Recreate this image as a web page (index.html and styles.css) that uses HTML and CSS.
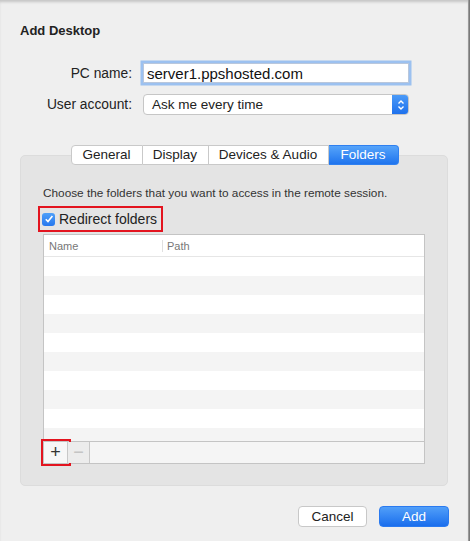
FILE: index.html
```html
<!DOCTYPE html>
<html lang="en">
<head>
<meta charset="UTF-8" />
<title>Add Desktop</title>
<link rel="stylesheet" href="styles.css">
</head>
<body>
<div class="window">
  <h1>Add Desktop</h1>

  <div class="form">
    <label for="pcName">PC name:</label>
    <input type="text" id="pcName" class="field focused" value="server1.ppshosted.com" />
    <label for="account">User account:</label>
    <div class="select" id="account">
      <span>Ask me every time</span>
      <span class="stepper">
        <svg width="8" height="12" viewBox="0 0 8 12"><path d="M1.5 4.5 L4 2 L6.5 4.5 M1.5 7.5 L4 10 L6.5 7.5" fill="none" stroke="#fff" stroke-width="1.4"/></svg>
      </span>
    </div>
  </div>

  <div class="tabs">
    <span class="tab">General</span>
    <span class="tab">Display</span>
    <span class="tab">Devices &amp; Audio</span>
    <span class="tab active">Folders</span>
  </div>
  <div class="group">
    <p class="desc">Choose the folders that you want to access in the remote session.</p>
    <label class="check highlight">
      <span class="box">
        <svg width="10" height="10" viewBox="0 0 10 10"><path d="M1.8 5.2 L4 7.6 L8.4 2" fill="none" stroke="#fff" stroke-width="1.6"/></svg>
      </span>
      Redirect folders
    </label>

    <div class="table">
      <div class="thead">
        <span class="col-name">Name</span>
        <span class="col-path">Path</span>
      </div>
      <div class="rows">
        <div class="row"></div><div class="row"></div><div class="row"></div>
        <div class="row"></div><div class="row"></div><div class="row"></div>
        <div class="row"></div><div class="row"></div><div class="row"></div>
        <div class="row"></div>
      </div>
      <div class="toolbar">
        <span class="tool plus highlight">+</span>
        <span class="tool minus">&minus;</span>
        <span class="tool-fill"></span>
      </div>
    </div>
  </div>

  <div class="actions">
    <button class="btn">Cancel</button>
    <button class="btn primary">Add</button>
  </div>
</div>
</body>
</html>
```
FILE: styles.css
```css
html, body {
  margin: 0;
  padding: 0;
  background: #7a7a7a;
}
body {
  font-family: "Liberation Sans", Arial, sans-serif;
  color: #222;
}
.window {
  width: 468px;
  height: 541px;
  background: #efefef;
  border-right: 1px solid #9a9a9a;
  box-shadow: inset 0 3px 3px -1px rgba(0, 0, 0, 0.18);
  overflow: hidden;
}
h1 {
  margin: 0;
  padding: 23px 0 0 20px;
  font-size: 13px;
  line-height: 16px;
  font-weight: bold;
}

/* form */
.form {
  display: grid;
  grid-template-columns: 132px 266px;
  column-gap: 11px;
  row-gap: 11px;
  align-items: center;
  margin-top: 24px;
}
.form label {
  text-align: right;
  font-size: 13.8px;
}
.field {
  box-sizing: border-box;
  height: 20px;
  padding: 0 3px;
  font: 15px "Liberation Sans", Arial, sans-serif;
  color: #111;
  border: 1px solid #b9c7dc;
  background: #fff;
  outline: none;
}
.field.focused {
  box-shadow: 0 0 0 2.5px #9cc1f0;
}
.select {
  box-sizing: border-box;
  height: 21px;
  display: flex;
  align-items: center;
  justify-content: space-between;
  background: #fff;
  border: 1px solid #c6c6c6;
  border-radius: 4px;
  font-size: 13.5px;
  padding-left: 8px;
  overflow: hidden;
}
.stepper {
  width: 17px;
  height: 21px;
  margin-right: -1px;
  background: linear-gradient(#4d9cf8, #1c6fec);
  display: flex;
  align-items: center;
  justify-content: center;
  border-radius: 0 4px 4px 0;
}

/* tabs */
.tabs {
  display: flex;
  justify-content: center;
  margin: 30px 0 -10px 1px;
  position: relative;
}
.tab {
  box-sizing: border-box;
  height: 20px;
  line-height: 18px;
  font-size: 13.5px;
  text-align: center;
  background: #fff;
  border: 1px solid #c9c9c9;
  border-left: none;
}
.tab:nth-child(1) { width: 72px; border-left: 1px solid #c9c9c9; border-radius: 4px 0 0 4px; }
.tab:nth-child(2) { width: 66px; }
.tab:nth-child(3) { width: 120px; }
.tab.active {
  width: 70px;
  color: #fff;
  border-color: #2f80f0;
  background: linear-gradient(#56a4fa, #1f74ee);
  border-radius: 0 4px 4px 0;
}
.group {
  margin: 0 20px;
  padding: 30px 22px 22px 22px;
  background: #e4e4e4;
  border: 1px solid #dcdcdc;
  border-radius: 5px;
  box-sizing: border-box;
  height: 331px;
}
.desc {
  margin: 0;
  font-size: 11.8px;
  color: #333;
}
.check {
  display: inline-flex;
  align-items: center;
  gap: 4px;
  font-size: 14px;
  margin-top: 8px;
  padding: 3px 4px 3px 2px;
  margin-left: -3px;
}
.highlight {
  outline: 2px solid #e3141f;
}
.box {
  width: 13px;
  height: 13px;
  border-radius: 3px;
  background: linear-gradient(#4fa0f9, #2577ee);
  display: flex;
  align-items: center;
  justify-content: center;
}

/* table */
.table {
  margin-top: 4px;
  background: #fff;
  border: 1px solid #c4c4c4;
}
.thead {
  display: flex;
  height: 21px;
  align-items: center;
  font-size: 11px;
  color: #777;
  border-bottom: 1px solid #e6e6e6;
}
.col-name {
  width: 113px;
  padding-left: 5px;
  border-right: 1px solid #e0e0e0;
}
.col-path {
  padding-left: 4px;
}
.rows {
  height: 184px;
  overflow: hidden;
}
.row {
  height: 19px;
}
.row:nth-child(even) {
  background: #f4f4f4;
}
.toolbar {
  display: flex;
  height: 21px;
  border-top: 1px solid #c4c4c4;
  background: #f5f5f5;
}
.tool {
  width: 23px;
  display: flex;
  align-items: center;
  justify-content: center;
  font-size: 18px;
  font-weight: 300;
  border-right: 1px solid #c8c8c8;
}
.tool.plus {
  color: #333;
  background: #f7f7f7;
  outline-offset: 1px;
}
.tool.minus {
  width: 21px;
  color: #c4c4c4;
  background: #ececec;
}
.tool-fill {
  flex: 1;
}

/* buttons */
.actions {
  display: flex;
  justify-content: flex-end;
  gap: 12px;
  margin: 20px 19px 0 0;
}
.btn {
  height: 21px;
  font: 13.5px "Liberation Sans", Arial, sans-serif;
  border-radius: 4px;
  border: 1px solid #c8c8c8;
  background: #fff;
  color: #222;
  width: 69px;
  padding: 0;
}
.btn.primary {
  width: 70px;
  color: #fff;
  border-color: #2a7af0;
  background: linear-gradient(#519ff9, #1a6eed);
}
```
